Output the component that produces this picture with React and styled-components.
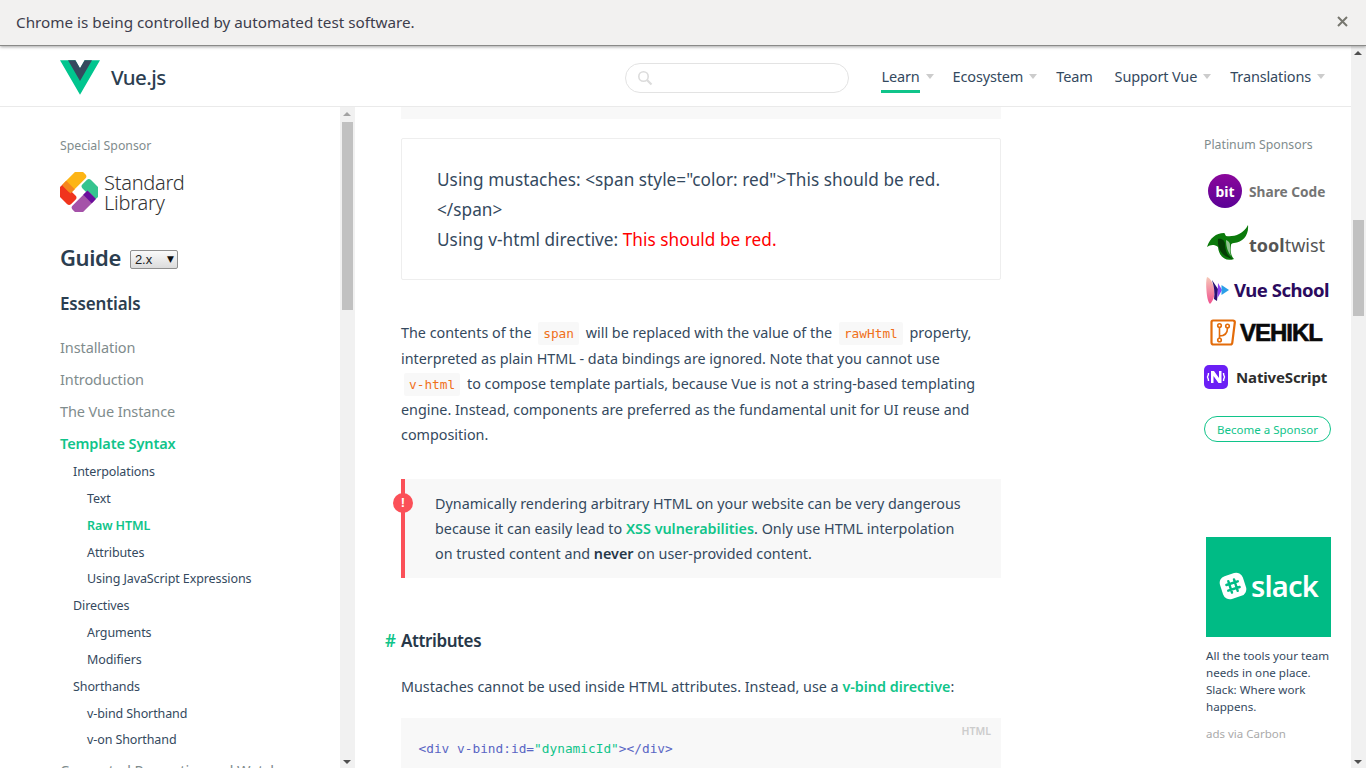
import React from "react"
import styled, { createGlobalStyle } from "styled-components"

const SANS = `"Noto Sans", "Open Sans", sans-serif`
const MONO = `"DejaVu Sans Mono", "Liberation Mono", monospace`
const GREEN = "#10c48a"
const TEXT = "#34495e"
const DANGER = "#fb5058"

const GlobalStyle = createGlobalStyle`
  html, body { margin: 0; height: 100%; overflow: hidden; background: #fff; }
  #root { height: 100%; }
  * { box-sizing: border-box; }
`

const navItems = [
  { label: "Learn", caret: true, active: true },
  { label: "Ecosystem", caret: true },
  { label: "Team" },
  { label: "Support Vue", caret: true },
  { label: "Translations", caret: true },
]

const menuItems = [
  { label: "Installation", level: 0 },
  { label: "Introduction", level: 0 },
  { label: "The Vue Instance", level: 0 },
  { label: "Template Syntax", level: 0, active: true },
  { label: "Interpolations", level: 1 },
  { label: "Text", level: 2 },
  { label: "Raw HTML", level: 2, active: true },
  { label: "Attributes", level: 2 },
  { label: "Using JavaScript Expressions", level: 2 },
  { label: "Directives", level: 1 },
  { label: "Arguments", level: 2 },
  { label: "Modifiers", level: 2 },
  { label: "Shorthands", level: 1 },
  { label: "v-bind Shorthand", level: 2 },
  { label: "v-on Shorthand", level: 2 },
  { label: "Computed Properties and Watchers", level: 0 },
]

const Screen = styled.div`
  height: 768px;
  display: flex;
  flex-direction: column;
  overflow: hidden;
  font-family: ${SANS};
  color: ${TEXT};
`

const InfoBar = styled.div`
  flex: none;
  height: 46px;
  padding: 0 18px 2px 16px;
  display: flex;
  align-items: center;
  justify-content: space-between;
  background: #f2f1f0;
  border-bottom: 1px solid #8a8a88;
  box-shadow: 0 1px 3px rgba(0, 0, 0, 0.35);
  position: relative;
  z-index: 2;
  font-size: 15.25px;
  color: #3d3d4c;
`

const CloseIcon = styled.svg`
  width: 11px;
  height: 11px;
  stroke: #77776f;
  stroke-width: 2;
  fill: none;
`

const PageFrame = styled.div`
  flex: 1;
  min-height: 0;
  display: flex;
`

const PageBody = styled.div`
  flex: 1;
  min-width: 0;
  display: flex;
  flex-direction: column;
`

const Header = styled.header`
  flex: none;
  height: 61px;
  padding: 3px 29px 0 60px;
  display: flex;
  align-items: center;
  background: #fff;
  border-bottom: 1px solid #eaeaea;
`

const Brand = styled.div`
  display: flex;
  align-items: center;
  gap: 11px;
  font-size: 20.5px;
  font-weight: 500;
  letter-spacing: -0.6px;
  color: #2c3e50;
`

const BrandName = styled.span`
  margin-top: -2px;
`

const SearchBox = styled.div`
  width: 224px;
  height: 30px;
  margin-left: auto;
  margin-right: 32px;
  padding-left: 11px;
  display: flex;
  align-items: center;
  border: 1px solid #e3e3e3;
  border-radius: 15px;
`

const NavList = styled.nav`
  display: flex;
  align-items: center;
  gap: 22px;
`

const NavItem = styled.a`
  position: relative;
  height: 30px;
  display: flex;
  align-items: center;
  gap: 6px;
  font-size: 14.5px;
  letter-spacing: -0.15px;
  color: ${TEXT};
`

const NavLabel = styled.span`
  position: relative;
  height: 30px;
  line-height: 27px;
  border-bottom: ${(p) => (p.$active ? `3px solid ${GREEN}` : "3px solid transparent")};
`

const Caret = styled.span`
  width: 0;
  height: 0;
  margin: -2px -3px 0 0;
  border-left: 4px solid transparent;
  border-right: 4px solid transparent;
  border-top: 5px solid #ccc;
`

const Columns = styled.div`
  flex: 1;
  min-height: 0;
  display: flex;
`

const Sidebar = styled.aside`
  flex: none;
  width: 340px;
  padding: 29px 0 0 60px;
  overflow: hidden;
`

const SmallLabel = styled.div`
  font-size: 12.3px;
  line-height: 20px;
  color: #7f8c8d;
`

const SpecialLogo = styled.div`
  height: 40px;
  margin-top: 16px;
  display: flex;
  align-items: center;
  gap: 6px;
`

const SpecialName = styled.div`
  font-size: 20px;
  line-height: 20px;
  font-weight: 300;
  letter-spacing: -0.25px;
  color: #333;
  margin-top: 1px;
`

const GuideRow = styled.div`
  height: 32px;
  margin-top: 29px;
  display: flex;
  align-items: center;
  gap: 9px;
`

const GuideTitle = styled.h2`
  margin: 0;
  font-size: 22px;
  font-weight: 600;
  letter-spacing: -0.4px;
  color: #2c3e50;
`

const VersionBox = styled.span`
  position: relative;
  width: 48px;
  height: 19px;
  margin-top: 5px;

  &::after {
    content: "▼";
    position: absolute;
    top: 4px;
    right: 4px;
    font: 9px/10px "DejaVu Sans", sans-serif;
    color: #111;
    pointer-events: none;
  }
`

const VersionSelect = styled.select`
  display: block;
  width: 100%;
  height: 100%;
  padding: 0 0 0 4px;
  appearance: none;
  border: 1px solid #8f8f8f;
  border-radius: 2px;
  background: linear-gradient(#fafafa, #dcdcdc);
  font: 13px "Liberation Sans", sans-serif;
  color: #222;
`

const SectionTitle = styled.h3`
  margin: 17px 0 0;
  font-size: 17px;
  line-height: 28px;
  font-weight: 600;
  letter-spacing: -0.15px;
  color: #2c3e50;
`

const MenuList = styled.ul`
  list-style: none;
  margin: 13px 0 0;
  padding: 0;
`

const MenuItem = styled.li`
  white-space: nowrap;
  height: ${(p) => (p.$level === 0 ? "32px" : "26.85px")};
  line-height: ${(p) => (p.$level === 0 ? "32px" : "26.85px")};
  padding-left: ${(p) => [0, 13, 27][p.$level]}px;
  font-size: ${(p) => (p.$level === 0 ? "14.5px" : "12.5px")};
  letter-spacing: -0.1px;
  font-weight: ${(p) => (p.$active ? 600 : 400)};
  color: ${(p) => (p.$active ? GREEN : p.$level === 0 ? "#7f8c8d" : TEXT)};
`

const Track = styled.div`
  flex: none;
  width: 15px;
  background: #f1f1f1;
  position: relative;
`

const Thumb = styled.div`
  position: absolute;
  left: 2px;
  width: 11px;
  background: #c1c1c1;
`

const TrackArrow = styled.span`
  position: absolute;
  left: 3px;
  width: 0;
  height: 0;
  border-left: 4px solid transparent;
  border-right: 4px solid transparent;
  ${(p) =>
    p.$down
      ? `bottom: 4px; border-top: 4px solid #505050;`
      : `top: 5px; border-bottom: 4px solid ${p.$dark ? "#505050" : "#a3a3a3"};`}
`

const Content = styled.main`
  flex: none;
  width: 646px;
  padding-left: 46px;
  overflow: hidden;
`

const ClippedCode = styled.div`
  height: 12px;
  background: #f8f8f8;
`

const DemoBox = styled.div`
  height: 142px;
  margin-top: 19px;
  padding: 26px 35px;
  border: 1px solid #eee;
  border-radius: 2px;
  font-size: 17.2px;
  line-height: 30px;
  letter-spacing: 0.04px;
  white-space: nowrap;
`

const RedText = styled.span`
  color: red;
`

const Paragraph = styled.p`
  margin: ${(p) => p.$top}px 0 0;
  font-size: 14.35px;
  line-height: 25.5px;
  white-space: nowrap;
`

const InlineCode = styled.code`
  margin: 0 3px;
  padding: 4px 5px;
  border-radius: 2px;
  background: #f8f8f8;
  font-family: ${MONO};
  font-size: 12.8px;
  line-height: 1;
  color: #f0701a;
`

const DocLink = styled.a`
  font-weight: 600;
  color: ${GREEN};
`

const Strong = styled.strong`
  font-weight: 600;
  color: #273849;
`

const Warning = styled.div`
  position: relative;
  height: 99px;
  margin-top: 31px;
  padding: 12px 0 0 30px;
  background: #f8f8f8;
  border-left: 4px solid ${DANGER};
  font-size: 14.35px;
  line-height: 25px;
  white-space: nowrap;
`

const WarningMark = styled.span`
  position: absolute;
  top: 14px;
  left: -12px;
  width: 20px;
  height: 20px;
  border-radius: 50%;
  background: ${DANGER};
  color: #fff;
  font: 700 13px/20px "Liberation Sans", sans-serif;
  text-align: center;
`

const Heading = styled.h3`
  position: relative;
  margin: 49px 0 0;
  font-size: 17px;
  line-height: 28px;
  font-weight: 600;
  letter-spacing: -0.4px;
  color: #273849;

  &::before {
    content: "#";
    position: absolute;
    left: -16px;
    color: ${GREEN};
  }
`

const CodeBlock = styled.pre`
  position: relative;
  height: 70px;
  margin: 19px 0 0;
  padding: 21px 18px 0 17.5px;
  background: #f8f8f8;
  font-family: ${MONO};
  font-size: 12.8px;
  line-height: 20px;
  color: #5a66c4;
`

const CodeLang = styled.span`
  position: absolute;
  top: 5px;
  right: 10px;
  font-family: ${SANS};
  font-size: 10.5px;
  font-weight: 600;
  line-height: 16px;
  color: #ccc;
`

const CodeString = styled.span`
  color: ${GREEN};
`

const AdColumn = styled.aside`
  flex: 1;
  min-width: 0;
  padding: 28px 0 0 203px;
  overflow: hidden;
`

const SponsorRow = styled.div`
  height: ${(p) => p.$height}px;
  margin-top: ${(p) => p.$top}px;
  padding-left: ${(p) => p.$indent}px;
  display: flex;
  align-items: center;
  gap: ${(p) => p.$gap}px;
  white-space: nowrap;
`

const SponsorName = styled.span`
  font-family: ${(p) => p.$font || SANS};
  font-size: ${(p) => p.$size}px;
  font-weight: ${(p) => p.$weight};
  letter-spacing: ${(p) => p.$track || 0}px;
  color: ${(p) => p.$color};
  margin-top: ${(p) => p.$drop || 0}px;
  -webkit-text-stroke: ${(p) => p.$stroke || 0}px ${(p) => p.$color};
`

const LightPart = styled.span`
  font-weight: 400;
`

const BitBadge = styled.span`
  width: 34px;
  height: 34px;
  display: flex;
  align-items: center;
  justify-content: center;
  border-radius: 50%;
  background: linear-gradient(#8b079b, #5b0296);
  color: #fff;
  font-size: 14px;
  font-weight: 700;
`

const SponsorButton = styled.a`
  display: block;
  width: 127px;
  height: 26px;
  margin-top: 27px;
  border: 1px solid ${GREEN};
  border-radius: 13px;
  font-size: 11.5px;
  line-height: 25px;
  text-align: center;
  color: ${GREEN};
`

const AdImage = styled.div`
  width: 125px;
  height: 100px;
  margin: 95px 0 0 2px;
  padding-bottom: 3px;
  display: flex;
  align-items: center;
  justify-content: center;
  gap: 4px;
  background: #00bb85;
  color: #fff;
  font-size: 29px;
  font-weight: 600;
  letter-spacing: -0.8px;
`

const AdText = styled.p`
  margin: 10px 0 0 2px;
  font-size: 11.6px;
  line-height: 17px;
  white-space: nowrap;
`

const AdFoot = styled.p`
  margin: 10px 0 0 2px;
  font-size: 11.5px;
  line-height: 17px;
  color: #aaa;
`

const VueLogo = () => (
  <svg width="40" height="35" viewBox="0 0 196.32 170.02">
    <path fill="#00c58e" d="M120.83 0L98.16 39.26 75.49 0H0l98.16 170.02L196.32 0h-75.49z" />
    <path fill="#35495e" d="M120.83 0L98.16 39.26 75.49 0H39.26l58.9 102.01L157.06 0h-36.23z" />
  </svg>
)

const SearchIcon = () => (
  <svg width="16" height="16" viewBox="0 0 16 16" fill="none" stroke="#dcdcdc" strokeWidth="1.6">
    <circle cx="6.5" cy="6.5" r="4.7" />
    <path d="M10 10l4.5 4.5" strokeWidth="2.2" />
  </svg>
)

const StandardLibraryLogo = () => (
  <svg width="38" height="40" viewBox="-19 -20 38 40">
    <g transform="rotate(45)">
      <rect x="-3" y="-17" width="20" height="12" rx="3" fill="#36c48f" />
      <rect x="-17" y="5" width="20" height="12" rx="3" fill="#f0341d" />
      <rect x="-17" y="-17" width="12" height="24" rx="3" fill="#fdb515" />
      <rect x="5" y="-7" width="12" height="24" rx="3" fill="#a552a9" />
      <path d="M-17 1h12v6h-12z" fill="#f5861f" />
      <path d="M5 -7h12v6h-12z" fill="#6a0d9c" />
    </g>
  </svg>
)

const ToolTwistIcon = () => (
  <svg width="42" height="36" viewBox="0 0 42 36">
    <path
      fill="#0b7a0b"
      d="M0 22C3 13 9 8 17 8c1 0 1 2 2 3 7 1 17-1 22-11 1 10-5 17-14 18-2 0-3 1-3 2-1 6 0 11 3 14-8 3-15-2-16-12-4-3-8-2-11 0z"
    />
    <path fill="#053d05" d="M11 14c-1 10 5 19 16 20-5-1-9-7-9-15 0-3-3-6-7-5z" />
    <path fill="#fff" opacity="0.55" d="M19 15c3 1 4 3 4 5 0 4 0 8 1 11-3-4-5-9-5-16z" />
  </svg>
)

const VueSchoolIcon = () => (
  <svg width="23" height="27" viewBox="0 0 23 27">
    <defs>
      <linearGradient id="vue-school-pink" x1="0" y1="0" x2="0" y2="1">
        <stop offset="0" stopColor="#f6c9b8" />
        <stop offset="1" stopColor="#f0508e" />
      </linearGradient>
    </defs>
    <path fill="url(#vue-school-pink)" d="M1 0c3 1 6 5 7 12 1 6 0 11-4 15-2-2-3-7-3.500-13C0 8 0 3 1 0z" />
    <path fill="#2a1070" d="M6 3l6 9-1 12-3-2c1-6 0-13-2-19z" />
    <path fill="#8d3ff0" d="M12 6l4 7-4.500 8z" />
    <path fill="#2a9fe8" d="M15.500 8l7.500 5-7.500 5z" />
  </svg>
)

const VehiklIcon = () => (
  <svg width="26" height="28" viewBox="0 0 26 28" fill="none" stroke="#e36c0a">
    <path strokeWidth="2.2" d="M3 1.500h20c1 0 2 1 1.800 2l-2.500 20c0 1-1 2-2 2H3.500c-1 0-2-1-2-2L1.500 3c0-1 .5-1.500 1.500-1.500z" />
    <path strokeWidth="1.600" d="M9.500 8v12M9.500 17c5 0 8-3 8-8" />
    <circle strokeWidth="1.600" cx="9.500" cy="6.500" r="1.800" />
    <circle strokeWidth="1.600" cx="17.500" cy="7" r="1.800" />
    <circle strokeWidth="1.600" cx="9.500" cy="21" r="1.800" />
  </svg>
)

const NativeScriptIcon = () => (
  <svg width="24" height="24" viewBox="0 0 24 24">
    <rect width="24" height="24" rx="5" fill="#6b1ff5" />
    <path fill="#fff" d="M7 6h3l5 7V6h2.500v12h-3L9.500 11v7H7z" />
    <path fill="none" stroke="#fff" strokeWidth="1.400" d="M4.500 8c0 3-1 3-1 4s1 1 1 4M19.500 8c0 3 1 3 1 4s-1 1-1 4" />
  </svg>
)

const SlackIcon = () => (
  <svg width="28" height="28" viewBox="0 0 28 28">
    <rect x="2" y="2" width="24" height="24" rx="7" fill="#fff" transform="rotate(-18 14 14)" />
    <g stroke="#00bb85" strokeWidth="2.400" strokeLinecap="round" transform="rotate(-18 14 14)">
      <path d="M11 8v12M17 8v12M8 11h12M8 17h12" />
    </g>
  </svg>
)

const App = () => (
  <Screen>
    <GlobalStyle />
    <InfoBar>
      <span>Chrome is being controlled by automated test software.</span>
      <CloseIcon viewBox="0 0 11 11">
        <path d="M1 1l9 9M10 1l-9 9" />
      </CloseIcon>
    </InfoBar>
    <PageFrame>
      <PageBody>
        <Header>
          <Brand>
            <VueLogo />
            <BrandName>Vue.js</BrandName>
          </Brand>
          <SearchBox>
            <SearchIcon />
          </SearchBox>
          <NavList>
            {navItems.map((item) => (
              <NavItem key={item.label}>
                <NavLabel $active={item.active}>{item.label}</NavLabel>
                {item.caret && <Caret />}
              </NavItem>
            ))}
          </NavList>
        </Header>
        <Columns>
          <Sidebar>
            <SmallLabel>Special Sponsor</SmallLabel>
            <SpecialLogo>
              <StandardLibraryLogo />
              <SpecialName>
                Standard
                <br />
                Library
              </SpecialName>
            </SpecialLogo>
            <GuideRow>
              <GuideTitle>Guide</GuideTitle>
              <VersionBox>
                <VersionSelect defaultValue="2.x">
                  <option>2.x</option>
                </VersionSelect>
              </VersionBox>
            </GuideRow>
            <SectionTitle>Essentials</SectionTitle>
            <MenuList>
              {menuItems.map((item) => (
                <MenuItem key={item.label} $level={item.level} $active={item.active}>
                  {item.label}
                </MenuItem>
              ))}
            </MenuList>
          </Sidebar>
          <Track>
            <TrackArrow />
            <Thumb style={{ top: 15, height: 188 }} />
            <TrackArrow $down $dark />
          </Track>
          <Content>
            <ClippedCode />
            <DemoBox>
              Using mustaches: &lt;span style="color: red"&gt;This should be red.
              <br />
              &lt;/span&gt;
              <br />
              Using v-html directive: <RedText>This should be red.</RedText>
            </DemoBox>
            <Paragraph $top={40}>
              The contents of the <InlineCode>span</InlineCode> will be replaced with the value of the{" "}
              <InlineCode>rawHtml</InlineCode> property,
              <br />
              interpreted as plain HTML - data bindings are ignored. Note that you cannot use
              <br />
              <InlineCode>v-html</InlineCode> to compose template partials, because Vue is not a string-based templating
              <br />
              engine. Instead, components are preferred as the fundamental unit for UI reuse and
              <br />
              composition.
            </Paragraph>
            <Warning>
              <WarningMark>!</WarningMark>
              Dynamically rendering arbitrary HTML on your website can be very dangerous
              <br />
              because it can easily lead to <DocLink>XSS vulnerabilities</DocLink>. Only use HTML interpolation
              <br />
              on trusted content and <Strong>never</Strong> on user-provided content.
            </Warning>
            <Heading>Attributes</Heading>
            <Paragraph $top={19}>
              Mustaches cannot be used inside HTML attributes. Instead, use a <DocLink>v-bind directive</DocLink>:
            </Paragraph>
            <CodeBlock>
              <CodeLang>HTML</CodeLang>
              {"<div v-bind:id="}
              <CodeString>"dynamicId"</CodeString>
              {"></div>"}
            </CodeBlock>
          </Content>
          <AdColumn>
            <SmallLabel>Platinum Sponsors</SmallLabel>
            <SponsorRow $height={34} $top={19} $indent={4} $gap={7}>
              <BitBadge>bit</BitBadge>
              <SponsorName $size={13.7} $weight={700} $color="#757575">
                Share Code
              </SponsorName>
            </SponsorRow>
            <SponsorRow $height={36} $top={17} $indent={3} $gap={0}>
              <ToolTwistIcon />
              <SponsorName $size={18} $weight={700} $drop={4} $color="#555">
                tool<LightPart>twist</LightPart>
              </SponsorName>
            </SponsorRow>
            <SponsorRow $height={27} $top={16} $indent={2} $gap={5}>
              <VueSchoolIcon />
              <SponsorName $size={18.5} $weight={700} $track={-0.5} $drop={-2} $color="#2b0b5e">
                Vue School
              </SponsorName>
            </SponsorRow>
            <SponsorRow $height={28} $top={15} $indent={6} $gap={4}>
              <VehiklIcon />
              <SponsorName
                $font={`"Liberation Sans", sans-serif`}
                $size={24}
                $weight={700}
                $track={-1}
                $stroke={0.6}
                $color="#0a0a0a"
              >
                VEHIKL
              </SponsorName>
            </SponsorRow>
            <SponsorRow $height={24} $top={18} $indent={0} $gap={8}>
              <NativeScriptIcon />
              <SponsorName $size={15} $weight={700} $track={-0.15} $color="#2e2e2e">
                NativeScript
              </SponsorName>
            </SponsorRow>
            <SponsorButton>Become a Sponsor</SponsorButton>
            <AdImage>
              <SlackIcon />
              <span>slack</span>
            </AdImage>
            <AdText>
              All the tools your team
              <br />
              needs in one place.
              <br />
              Slack: Where work
              <br />
              happens.
            </AdText>
            <AdFoot>ads via Carbon</AdFoot>
          </AdColumn>
        </Columns>
      </PageBody>
      <Track>
        <TrackArrow $dark />
        <Thumb style={{ top: 174, height: 96 }} />
        <TrackArrow $down $dark />
      </Track>
    </PageFrame>
  </Screen>
)

export default App
